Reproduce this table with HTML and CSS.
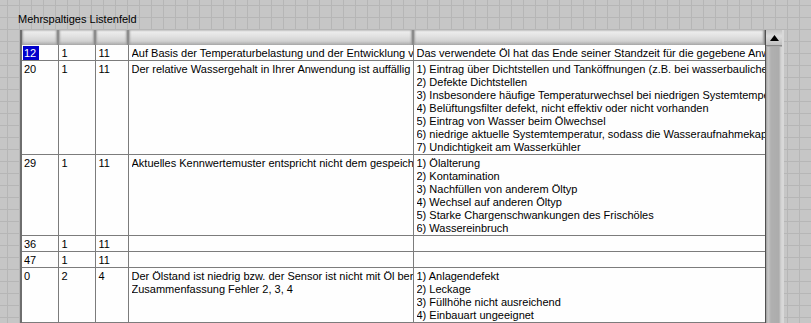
FILE: index.html
```html
<!DOCTYPE html>
<html lang="de">
<head>
<meta charset="utf-8">
<title>Mehrspaltiges Listenfeld</title>
<link rel="stylesheet" href="styles.css">
</head>
<body>
<div class="panel">
  <div class="label">Mehrspaltiges Listenfeld</div>
  <div class="listbox">
    <div class="table-wrap">
      <table class="grid">
        <colgroup>
          <col class="c1"><col class="c2"><col class="c3"><col class="c4"><col class="c5">
        </colgroup>
        <thead>
          <tr><th></th><th></th><th></th><th></th><th></th></tr>
        </thead>
        <tbody>
          <tr>
            <td><span class="sel">12</span></td><td>1</td><td>11</td>
            <td><div class="clip">Auf Basis der Temperaturbelastung und der Entwicklung von Temperaturwerten</div></td>
            <td><div class="clip">Das verwendete Öl hat das Ende seiner Standzeit für die gegebene Anwendung erreicht</div></td>
          </tr>
          <tr>
            <td>20</td><td>1</td><td>11</td>
            <td><div class="clip">Der relative Wassergehalt in Ihrer Anwendung ist auffällig hoch</div></td>
            <td>
              <div class="clip">1) Eintrag über Dichtstellen und Tanköffnungen (z.B. bei wasserbaulichen Anlagen)</div>
              <div class="clip">2) Defekte Dichtstellen</div>
              <div class="clip">3) Insbesondere häufige Temperaturwechsel bei niedrigen Systemtemperaturen</div>
              <div class="clip">4) Belüftungsfilter defekt, nicht effektiv oder nicht vorhanden</div>
              <div class="clip">5) Eintrag von Wasser beim Ölwechsel</div>
              <div class="clip">6) niedrige aktuelle Systemtemperatur, sodass die Wasseraufnahmekapazität sinkt</div>
              <div class="clip">7) Undichtigkeit am Wasserkühler</div>
            </td>
          </tr>
          <tr>
            <td>29</td><td>1</td><td>11</td>
            <td><div class="clip">Aktuelles Kennwertemuster entspricht nicht dem gespeicherten Muster</div></td>
            <td>
              <div class="clip">1) Ölalterung</div>
              <div class="clip">2) Kontamination</div>
              <div class="clip">3) Nachfüllen von anderem Öltyp</div>
              <div class="clip">4) Wechsel auf anderen Öltyp</div>
              <div class="clip">5) Starke Chargenschwankungen des Frischöles</div>
              <div class="clip">6) Wassereinbruch</div>
            </td>
          </tr>
          <tr><td>36</td><td>1</td><td>11</td><td></td><td></td></tr>
          <tr><td>47</td><td>1</td><td>11</td><td></td><td></td></tr>
          <tr>
            <td>0</td><td>2</td><td>4</td>
            <td>
              <div class="clip">Der Ölstand ist niedrig bzw. der Sensor ist nicht mit Öl benetzt</div>
              <div class="clip">Zusammenfassung Fehler 2, 3, 4</div>
            </td>
            <td>
              <div class="clip">1) Anlagendefekt</div>
              <div class="clip">2) Leckage</div>
              <div class="clip">3) Füllhöhe nicht ausreichend</div>
              <div class="clip">4) Einbauart ungeeignet</div>
            </td>
          </tr>
        </tbody>
      </table>
    </div>
    <div class="scrollbar">
      <div class="arrow-btn">
        <svg width="9" height="6" viewBox="0 0 9 6"><polygon points="4.5,0 9,6 0,6" fill="#000"/></svg>
      </div>
      <div class="thumb"></div>
    </div>
  </div>
</div>
</body>
</html>
```

FILE: styles.css
```css
html, body {
  margin: 0;
  padding: 0;
  height: 100%;
  overflow: hidden;
}
body {
  background-color: #c6c6c6;
  background-image:
    linear-gradient(to right, #b6b6b6 1px, transparent 1px),
    linear-gradient(to bottom, #b6b6b6 1px, transparent 1px);
  background-size: 12px 12px;
  background-position: 7px 5px;
  font-family: "Liberation Sans", Arial, sans-serif;
  font-size: 11px;
  color: #000;
}
.panel {
  padding: 12px 0 0 18px;
}
.label {
  height: 18px;
  line-height: 14px;
}
.listbox {
  display: flex;
  margin-left: 2px;
  width: 762px;
  height: 293px;
  box-shadow: 2px 0 0 #d8d8d8;
}
.table-wrap {
  width: 744px;
  background: #fefefe;
  border-left: 2px solid #6e6e6e;
  overflow: hidden;
}
.grid {
  border-collapse: collapse;
  table-layout: fixed;
  width: 743px;
}
.c1 { width: 36px; }
.c2 { width: 37px; }
.c3 { width: 33px; }
.c4 { width: 285px; }
.c5 { width: 352px; }
.grid th {
  height: 15px;
  padding: 0;
  background: linear-gradient(to bottom, #c8c8c8 0, #ececec 2px, #e2e2e2 6px, #d2d2d2 11px, #a8a8a8 15px);
  border-right: 2px solid #8c8c8c;
  box-shadow: inset 2px 0 2px -1px #a0a0a0, inset -2px 0 2px -1px #a0a0a0;
}
.grid td {
  padding: 2px 0 0 3px;
  height: 13px;
  line-height: 13px;
  vertical-align: top;
  border-right: 1px solid #7c7c7c;
  border-bottom: 1px solid #7c7c7c;
  white-space: nowrap;
  overflow: hidden;
}
.grid tr td:first-child { padding-left: 2px; }
.clip {
  overflow: hidden;
  white-space: nowrap;
}
.sel {
  display: inline-block;
  background: #0000cc;
  color: #fff;
  padding: 0 3px 0 1px;
  margin-left: -1px;
  margin-top: -1px;
  line-height: 14px;
}
.scrollbar {
  width: 16px;
  display: flex;
  flex-direction: column;
  background: #ababab;
  border-left: 1px solid #505050;
}
.arrow-btn {
  height: 15px;
  display: flex;
  align-items: center;
  justify-content: center;
  background: linear-gradient(to bottom, #c4c4c4, #dcdcdc 40%, #c0c0c0);
  border-bottom: 1px solid #888;
}
.thumb {
  flex: 1;
  margin: 1px 0 0 0;
  background: linear-gradient(to right, #9c9c9c 0, #c8c8c8 2px, #b0b0b0 5px, #acacac 13px, #d4d4d4 15px);
}
```
